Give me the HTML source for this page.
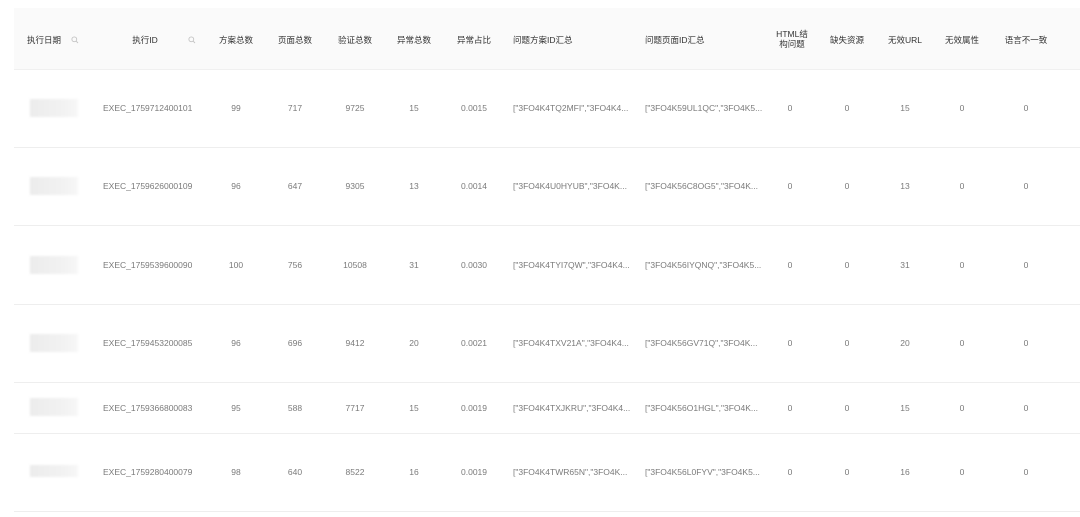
<!DOCTYPE html>
<html><head><meta charset="utf-8"><style>
body{margin:0;width:1080px;height:517px;background:#fff;position:relative;overflow:hidden;font-family:"Liberation Sans","Noto Sans CJK SC",sans-serif;}
.hd{position:absolute;left:14px;top:8px;width:1066px;height:61px;background:#fafafa;border-bottom:1px solid #f0f0f0;}
.t{position:absolute;font-size:8.5px;white-space:nowrap;line-height:10px;}
.h{color:#333;}
.d{color:#7a7a7a;}
.c{transform:translateX(-50%);text-align:center;}
.line{position:absolute;left:14px;width:1066px;height:1px;background:#eeeeee;}
.blur{position:absolute;left:30px;width:48px;height:18px;background:linear-gradient(90deg,#ececec,#f2f2f2 70%,#f7f7f7);filter:blur(1px);}
.ic{position:absolute;width:8px;height:8px;}
</style></head><body>
<div class="hd"></div>
<div class="t h" style="left:27px;top:35px">执行日期</div><svg class="ic" style="left:71px;top:36px" viewBox="0 0 8 8"><circle cx="3.3" cy="3.3" r="2.4" fill="none" stroke="#c4c4c4" stroke-width="0.9"/><path d="M5.1 5.1L7 7" stroke="#c4c4c4" stroke-width="0.9"/></svg>
<div class="t h c" style="left:145px;top:35px">执行ID</div><svg class="ic" style="left:188px;top:36px" viewBox="0 0 8 8"><circle cx="3.3" cy="3.3" r="2.4" fill="none" stroke="#c4c4c4" stroke-width="0.9"/><path d="M5.1 5.1L7 7" stroke="#c4c4c4" stroke-width="0.9"/></svg>
<div class="t h c" style="left:236px;top:35px">方案总数</div>
<div class="t h c" style="left:295px;top:35px">页面总数</div>
<div class="t h c" style="left:355px;top:35px">验证总数</div>
<div class="t h c" style="left:414px;top:35px">异常总数</div>
<div class="t h c" style="left:474px;top:35px">异常占比</div>
<div class="t h" style="left:513px;top:35px">问题方案ID汇总</div>
<div class="t h" style="left:645px;top:35px">问题页面ID汇总</div>
<div class="t h c" style="left:792px;top:29px">HTML结<br>构问题</div>
<div class="t h c" style="left:847px;top:35px">缺失资源</div>
<div class="t h c" style="left:905px;top:35px">无效URL</div>
<div class="t h c" style="left:962px;top:35px">无效属性</div>
<div class="t h c" style="left:1026px;top:35px">语言不一致</div>

<div class="line" style="top:147px"></div>
<div class="line" style="top:225px"></div>
<div class="line" style="top:304px"></div>
<div class="line" style="top:382px"></div>
<div class="line" style="top:433px"></div>
<div class="line" style="top:511px"></div>

<div class="blur" style="top:99px"></div>
<div class="t d" style="left:103px;top:103px">EXEC_1759712400101</div>
<div class="t d c" style="left:236px;top:103px">99</div>
<div class="t d c" style="left:295px;top:103px">717</div>
<div class="t d c" style="left:355px;top:103px">9725</div>
<div class="t d c" style="left:414px;top:103px">15</div>
<div class="t d c" style="left:474px;top:103px">0.0015</div>
<div class="t d" style="left:513px;top:103px">["3FO4K4TQ2MFI","3FO4K4...</div>
<div class="t d" style="left:645px;top:103px">["3FO4K59UL1QC","3FO4K5...</div>
<div class="t d c" style="left:790px;top:103px">0</div>
<div class="t d c" style="left:847px;top:103px">0</div>
<div class="t d c" style="left:905px;top:103px">15</div>
<div class="t d c" style="left:962px;top:103px">0</div>
<div class="t d c" style="left:1026px;top:103px">0</div>

<div class="blur" style="top:177px"></div>
<div class="t d" style="left:103px;top:181px">EXEC_1759626000109</div>
<div class="t d c" style="left:236px;top:181px">96</div>
<div class="t d c" style="left:295px;top:181px">647</div>
<div class="t d c" style="left:355px;top:181px">9305</div>
<div class="t d c" style="left:414px;top:181px">13</div>
<div class="t d c" style="left:474px;top:181px">0.0014</div>
<div class="t d" style="left:513px;top:181px">["3FO4K4U0HYUB","3FO4K...</div>
<div class="t d" style="left:645px;top:181px">["3FO4K56C8OG5","3FO4K...</div>
<div class="t d c" style="left:790px;top:181px">0</div>
<div class="t d c" style="left:847px;top:181px">0</div>
<div class="t d c" style="left:905px;top:181px">13</div>
<div class="t d c" style="left:962px;top:181px">0</div>
<div class="t d c" style="left:1026px;top:181px">0</div>

<div class="blur" style="top:256px"></div>
<div class="t d" style="left:103px;top:260px">EXEC_1759539600090</div>
<div class="t d c" style="left:236px;top:260px">100</div>
<div class="t d c" style="left:295px;top:260px">756</div>
<div class="t d c" style="left:355px;top:260px">10508</div>
<div class="t d c" style="left:414px;top:260px">31</div>
<div class="t d c" style="left:474px;top:260px">0.0030</div>
<div class="t d" style="left:513px;top:260px">["3FO4K4TYI7QW","3FO4K4...</div>
<div class="t d" style="left:645px;top:260px">["3FO4K56IYQNQ","3FO4K5...</div>
<div class="t d c" style="left:790px;top:260px">0</div>
<div class="t d c" style="left:847px;top:260px">0</div>
<div class="t d c" style="left:905px;top:260px">31</div>
<div class="t d c" style="left:962px;top:260px">0</div>
<div class="t d c" style="left:1026px;top:260px">0</div>

<div class="blur" style="top:334px"></div>
<div class="t d" style="left:103px;top:338px">EXEC_1759453200085</div>
<div class="t d c" style="left:236px;top:338px">96</div>
<div class="t d c" style="left:295px;top:338px">696</div>
<div class="t d c" style="left:355px;top:338px">9412</div>
<div class="t d c" style="left:414px;top:338px">20</div>
<div class="t d c" style="left:474px;top:338px">0.0021</div>
<div class="t d" style="left:513px;top:338px">["3FO4K4TXV21A","3FO4K4...</div>
<div class="t d" style="left:645px;top:338px">["3FO4K56GV71Q","3FO4K...</div>
<div class="t d c" style="left:790px;top:338px">0</div>
<div class="t d c" style="left:847px;top:338px">0</div>
<div class="t d c" style="left:905px;top:338px">20</div>
<div class="t d c" style="left:962px;top:338px">0</div>
<div class="t d c" style="left:1026px;top:338px">0</div>

<div class="blur" style="top:398px"></div>
<div class="t d" style="left:103px;top:403px">EXEC_1759366800083</div>
<div class="t d c" style="left:236px;top:403px">95</div>
<div class="t d c" style="left:295px;top:403px">588</div>
<div class="t d c" style="left:355px;top:403px">7717</div>
<div class="t d c" style="left:414px;top:403px">15</div>
<div class="t d c" style="left:474px;top:403px">0.0019</div>
<div class="t d" style="left:513px;top:403px">["3FO4K4TXJKRU","3FO4K4...</div>
<div class="t d" style="left:645px;top:403px">["3FO4K56O1HGL","3FO4K...</div>
<div class="t d c" style="left:790px;top:403px">0</div>
<div class="t d c" style="left:847px;top:403px">0</div>
<div class="t d c" style="left:905px;top:403px">15</div>
<div class="t d c" style="left:962px;top:403px">0</div>
<div class="t d c" style="left:1026px;top:403px">0</div>

<div class="blur" style="top:465px;height:12px"></div>
<div class="t d" style="left:103px;top:467px">EXEC_1759280400079</div>
<div class="t d c" style="left:236px;top:467px">98</div>
<div class="t d c" style="left:295px;top:467px">640</div>
<div class="t d c" style="left:355px;top:467px">8522</div>
<div class="t d c" style="left:414px;top:467px">16</div>
<div class="t d c" style="left:474px;top:467px">0.0019</div>
<div class="t d" style="left:513px;top:467px">["3FO4K4TWR65N","3FO4K...</div>
<div class="t d" style="left:645px;top:467px">["3FO4K56L0FYV","3FO4K5...</div>
<div class="t d c" style="left:790px;top:467px">0</div>
<div class="t d c" style="left:847px;top:467px">0</div>
<div class="t d c" style="left:905px;top:467px">16</div>
<div class="t d c" style="left:962px;top:467px">0</div>
<div class="t d c" style="left:1026px;top:467px">0</div>
</body></html>
